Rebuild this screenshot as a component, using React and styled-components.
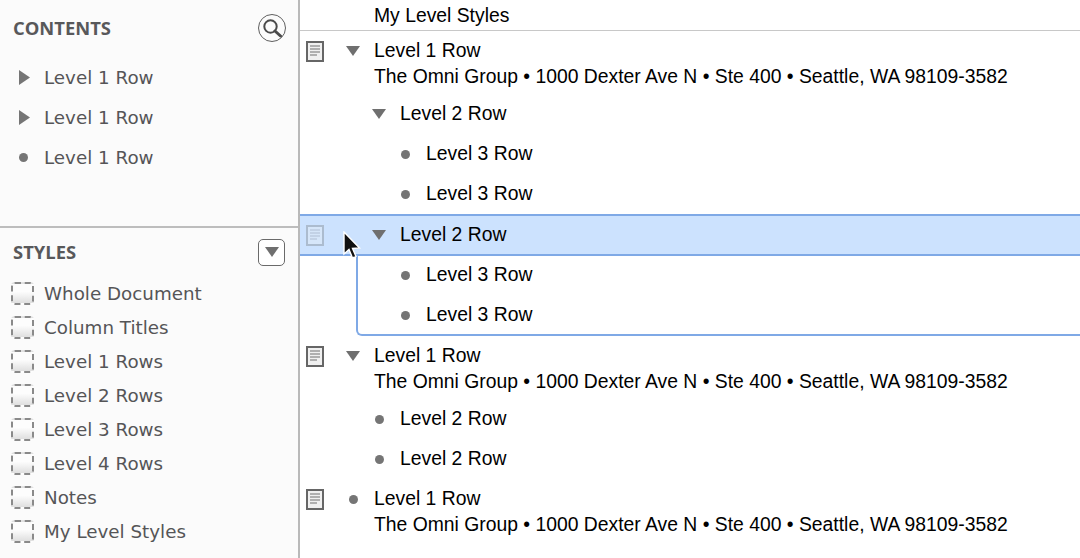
import React from 'react'
import styled, { createGlobalStyle } from 'styled-components'

const Global = createGlobalStyle`
  html, body { margin: 0; padding: 0; background: #fff; }
  body { width: 1080px; height: 558px; overflow: hidden; }
`

const ADDRESS = 'The Omni Group • 1000 Dexter Ave N • Ste 400 • Seattle, WA 98109-3582'

const Page = styled.div`
  display: flex;
  width: 1080px;
  height: 558px;
  overflow: hidden;
`

const Sidebar = styled.aside`
  width: 298px;
  flex: none;
  display: flex;
  flex-direction: column;
  background: #fbfbfb;
  border-right: 2px solid #b9b9b9;
  font-family: "DejaVu Sans", sans-serif;
  color: #555557;
`

const ContentsPane = styled.section`
  height: 228px;
  flex: none;
  box-sizing: border-box;
  padding: 14px 13px 0 0;
  border-bottom: 2px solid #bdbdbd;
`

const StylesPane = styled.section`
  flex: 1;
  padding: 10px 13px 0 0;
`

const PaneHeader = styled.div`
  display: flex;
  align-items: center;
  justify-content: space-between;
  height: 28px;
  padding-left: 13px;
`

const PaneTitle = styled.h2`
  margin: 0 0 2px;
  font-family: "Open Sans", sans-serif;
  font-size: 18.4px;
  font-weight: 700;
  color: #58585a;
`

const ContentsList = styled.div`
  margin-top: 15px;
  display: flex;
  flex-direction: column;
`

const ContentsRow = styled.div`
  display: flex;
  align-items: center;
  height: 40px;
  font-size: 18.3px;
  padding-left: 19px;
`

const HandleSlot = styled.span`
  width: 25px;
  flex: none;
  display: flex;
  align-items: center;
`

const StylesList = styled.div`
  margin-top: 10px;
  display: flex;
  flex-direction: column;
`

const StyleRow = styled.div`
  display: flex;
  align-items: center;
  height: 34px;
  font-size: 18.3px;
  padding-left: 11px;
`

const Swatch = styled.span`
  width: 23px;
  height: 23px;
  flex: none;
  box-sizing: border-box;
  margin-right: 10px;
  border: 2px dashed #8a8a8a;
  border-radius: 4px;
  background: linear-gradient(#fdfdfd 40%, #dfdfdf);
`

const Main = styled.main`
  flex: 1;
  min-width: 0;
  font-family: "Liberation Sans", Arial, sans-serif;
  font-size: 19.33px;
  color: #000;
`

const TitleRow = styled.div`
  height: 30px;
  line-height: 32px;
  padding-left: 74px;
  border-bottom: 1px solid #c8c8c8;
`

const Row = styled.div`
  position: relative;
  display: flex;
  align-items: flex-start;
  box-sizing: border-box;
  padding: ${p => (p.$note ? '7px 0 3px 6px' : '8px 0 6px 6px')};
  min-height: 40px;
  margin-top: ${p => (p.$last ? 1 : 0)}px;
  ${p => p.$selected && `
    height: 42px;
    margin-top: 1px;
    padding-top: 6px;
    background: #cce2fe;
    border-top: 2px solid #7fa9e6;
    border-bottom: 2px solid #7fa9e6;
  `}
`

const NoteSlot = styled.span`
  width: 37px;
  height: 26px;
  flex: none;
  display: flex;
  align-items: center;
  opacity: ${p => (p.$faded ? 0.3 : 1)};
`

const Handle = styled.span`
  width: 20px;
  height: 26px;
  flex: none;
  display: flex;
  align-items: center;
  justify-content: center;
  margin-left: ${p => (p.$level - 1) * 26}px;
  margin-right: 11px;
`

const RowText = styled.div`
  line-height: 26px;
  white-space: nowrap;
`

const ChildBlock = styled.div`
  display: flow-root;
  margin-left: 56px;
  height: 78px;
  border-left: 2px solid #7fa9e6;
  border-bottom: 2px solid #7fa9e6;
  border-bottom-left-radius: 6px;
`

const ChildInner = styled.div`
  margin: -2px 0 0 -58px;
`

const CursorMark = styled.svg`
  position: absolute;
  left: 42px;
  top: 15px;
  z-index: 2;
`

const RoundButton = styled.span`
  width: 28px;
  height: 28px;
  margin-right: -1px;
  box-sizing: border-box;
  border: 1.5px solid #5f5f5f;
  border-radius: 50%;
  display: flex;
  align-items: center;
  justify-content: center;
`

const SquareButton = styled.span`
  width: 27px;
  height: 27px;
  box-sizing: border-box;
  border: 1.5px solid #6a6a6a;
  border-radius: 5px;
  background: #fff;
  display: flex;
  align-items: center;
  justify-content: center;
`

const TriangleRight = () => (
  <svg width="11" height="15" viewBox="0 0 11 15"><path d="M0 0 L11 7.5 L0 15 Z" fill="#757575" /></svg>
)

const TriangleDown = () => (
  <svg width="14" height="10" viewBox="0 0 14 10"><path d="M0 0 H14 L7 10 Z" fill="#6f6f6f" /></svg>
)

const Bullet = () => (
  <svg width="9" height="9" viewBox="0 0 10 10"><circle cx="5" cy="5" r="5" fill="#757575" /></svg>
)

const NoteIcon = () => (
  <svg width="18" height="21" viewBox="0 0 18 21">
    <rect x="1" y="1" width="16" height="19" fill="#f0f0f0" stroke="#666" strokeWidth="2" />
    <path d="M4 5 H14 M4 8 H14 M4 11 H14 M4 14 H11" stroke="#9a9a9a" strokeWidth="1.5" />
  </svg>
)

const SearchIcon = () => (
  <svg width="20" height="20" viewBox="0 0 20 20" fill="none" stroke="#4a4a4a">
    <circle cx="8.5" cy="8.5" r="6.2" strokeWidth="2" />
    <path d="M13 13 L18.5 18" strokeWidth="3" strokeLinecap="round" />
  </svg>
)

const Cursor = () => (
  <CursorMark width="20" height="30" viewBox="0 0 20 30">
    <path d="M2 1 L2 23 L7 18.5 L10.5 27 L14 25.5 L10.5 17.5 L17.5 17 Z" fill="#111" stroke="#fff" strokeWidth="1.4" />
  </CursorMark>
)

const TreeRow = ({ level, kind, note, selected, last, children }) => (
  <Row $note={note} $selected={selected} $last={last}>
    <NoteSlot $faded={selected}>{(note || selected) && <NoteIcon />}</NoteSlot>
    {selected && <Cursor />}
    <Handle $level={level}>{kind === 'open' ? <TriangleDown /> : <Bullet />}</Handle>
    <RowText>{children}</RowText>
  </Row>
)

const contents = ['closed', 'closed', 'leaf']
const styleNames = ['Whole Document', 'Column Titles', 'Level 1 Rows', 'Level 2 Rows', 'Level 3 Rows', 'Level 4 Rows', 'Notes', 'My Level Styles']

export default function App() {
  return (
    <>
      <Global />
      <Page>
        <Sidebar>
          <ContentsPane>
            <PaneHeader>
              <PaneTitle>CONTENTS</PaneTitle>
              <RoundButton><SearchIcon /></RoundButton>
            </PaneHeader>
            <ContentsList>
              {contents.map((kind, i) => (
                <ContentsRow key={i}>
                  <HandleSlot>{kind === 'closed' ? <TriangleRight /> : <Bullet />}</HandleSlot>
                  Level 1 Row
                </ContentsRow>
              ))}
            </ContentsList>
          </ContentsPane>
          <StylesPane>
            <PaneHeader>
              <PaneTitle>STYLES</PaneTitle>
              <SquareButton><TriangleDown /></SquareButton>
            </PaneHeader>
            <StylesList>
              {styleNames.map(name => (
                <StyleRow key={name}><Swatch />{name}</StyleRow>
              ))}
            </StylesList>
          </StylesPane>
        </Sidebar>
        <Main>
          <TitleRow>My Level Styles</TitleRow>
          <TreeRow level={1} kind="open" note>Level 1 Row<br />{ADDRESS}</TreeRow>
          <TreeRow level={2} kind="open">Level 2 Row</TreeRow>
          <TreeRow level={3}>Level 3 Row</TreeRow>
          <TreeRow level={3}>Level 3 Row</TreeRow>
          <TreeRow level={2} kind="open" selected>Level 2 Row</TreeRow>
          <ChildBlock>
            <ChildInner>
              <TreeRow level={3}>Level 3 Row</TreeRow>
              <TreeRow level={3}>Level 3 Row</TreeRow>
            </ChildInner>
          </ChildBlock>
          <TreeRow level={1} kind="open" note>Level 1 Row<br />{ADDRESS}</TreeRow>
          <TreeRow level={2}>Level 2 Row</TreeRow>
          <TreeRow level={2}>Level 2 Row</TreeRow>
          <TreeRow level={1} note last>Level 1 Row<br />{ADDRESS}</TreeRow>
        </Main>
      </Page>
    </>
  )
}
